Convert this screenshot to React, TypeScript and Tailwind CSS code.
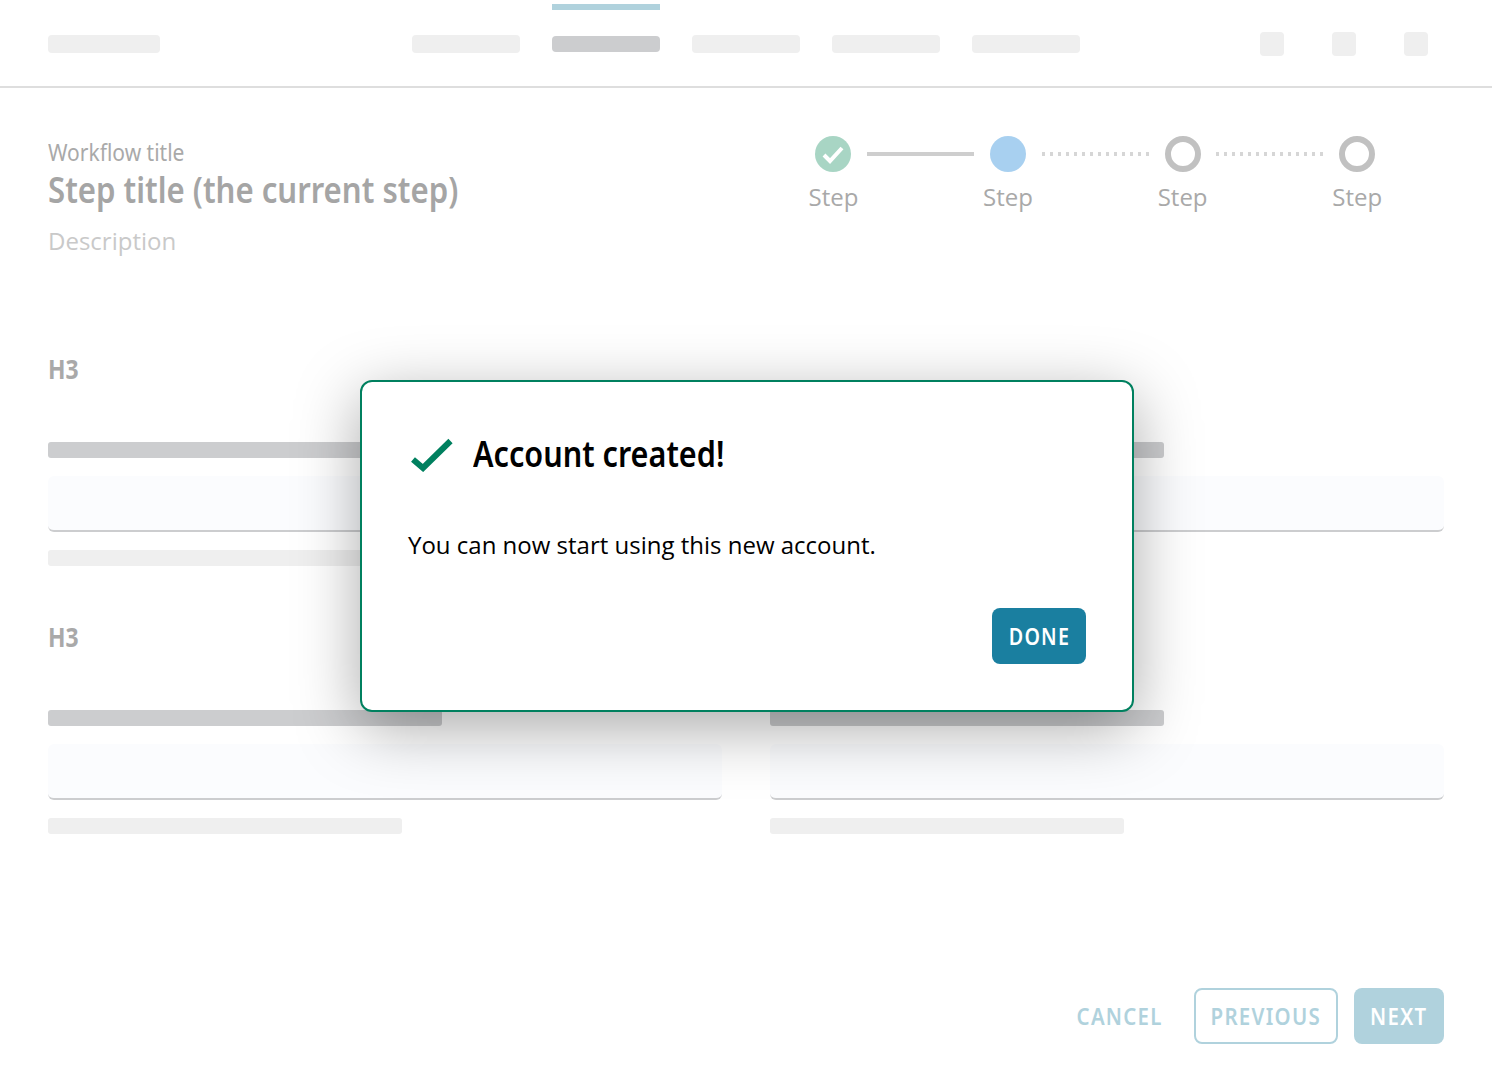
const noto = "font-['Noto_Sans',sans-serif]";
const body = "font-['Open_Sans','Noto_Sans',sans-serif]";
const btn = `${noto} text-[24px] font-semibold tracking-[1.5px]`;

function Field() {
  return (
    <div className="flex flex-col">
      <div className="h-4 w-[394px] rounded-[3px] bg-[#cccdcf]" />
      <div className="mt-[18px] h-14 w-full rounded-md border-b-2 border-[#cccdcf] bg-[#fbfcfe]" />
      <div className="mt-[18px] h-4 w-[354px] rounded-[3px] bg-[#efefef]" />
    </div>
  );
}

function Group({ className }: { className: string }) {
  return (
    <section className={className}>
      <h3 className={`${noto} h-8 origin-left scale-x-[0.88] text-[26px] leading-8 font-bold text-[#a9a9a9]`}>H3</h3>
      <div className="mt-[57px] grid grid-cols-[674px_674px] gap-x-12">
        <Field />
        <Field />
      </div>
    </section>
  );
}

function Circle({ kind }: { kind: "done" | "current" | "todo" }) {
  if (kind === "done")
    return (
      <svg width="36" height="36" viewBox="0 0 36 36">
        <circle cx="18" cy="18" r="18" fill="#a8d5c4" />
        <path d="M9 19 L15 25 L27 12" fill="none" stroke="#fff" strokeWidth="4" />
      </svg>
    );
  if (kind === "current") return <div className="size-9 rounded-full bg-[#a8d0f0]" />;
  return <div className="size-9 rounded-full border-[6px] border-[#c1c1c1]" />;
}

function Step({ kind }: { kind: "done" | "current" | "todo" }) {
  return (
    <div className="flex w-[69.6px] flex-col items-center">
      <Circle kind={kind} />
      <span className={`${body} mt-[10px] text-[24px] leading-[30px] text-[#a9a9a9]`}>Step</span>
    </div>
  );
}

function Solid() {
  return <div className="mx-[-1px] mt-4 h-1 w-[107px] shrink-0 bg-[#cecece]" />;
}

function Dotted() {
  return (
    <div className="mx-[-1px] mt-4 flex h-1 w-[107px] shrink-0 justify-between">
      {Array.from({ length: 14 }).map((_, i) => (
        <span key={i} className="h-1 w-[3px] bg-[#d6d6d6]" />
      ))}
    </div>
  );
}

export default function App() {
  return (
    <div className="relative h-[1092px] w-[1492px] overflow-hidden bg-white">
      <header className="relative flex h-[88px] items-center border-b-2 border-[#dedede] pl-12 pr-16 pt-0.5">
        <div className="h-[18px] w-28 rounded-[4px] bg-[#efefef]" />
        <nav className="ml-[252px] flex items-center gap-8">
          <div className="h-[18px] w-[108px] rounded-[4px] bg-[#efefef]" />
          <div className="relative h-4 w-[108px] rounded-[4px] bg-[#cccdcf]">
            <div className="absolute -top-8 left-0 h-1.5 w-full bg-[#b0d2dd]" />
          </div>
          <div className="h-[18px] w-[108px] rounded-[4px] bg-[#efefef]" />
          <div className="h-[18px] w-[108px] rounded-[4px] bg-[#efefef]" />
          <div className="h-[18px] w-[108px] rounded-[4px] bg-[#efefef]" />
        </nav>
        <div className="ml-auto flex gap-12">
          <div className="size-6 rounded-[4px] bg-[#efefef]" />
          <div className="size-6 rounded-[4px] bg-[#efefef]" />
          <div className="size-6 rounded-[4px] bg-[#efefef]" />
        </div>
      </header>

      <main className="px-12">
        <div className="flex h-[186px] items-start justify-between pt-[48px]">
          <div className="mt-[2px] flex flex-col items-start">
            <span className={`${noto} origin-left scale-x-[0.875] text-[24px] leading-[28px] text-[#a9a9a9]`}>Workflow title</span>
            <span className={`${noto} mt-[4px] origin-left scale-x-[0.865] text-[36px] leading-[40px] font-semibold text-[#a5a5a5]`}>
              Step title (the current step)
            </span>
            <span className={`${body} mt-[15px] text-[24px] leading-8 text-[#c9c9c9]`}>Description</span>
          </div>
          <div className="mr-[52px] flex items-start">
            <Step kind="done" />
            <Solid />
            <Step kind="current" />
            <Dotted />
            <Step kind="todo" />
            <Dotted />
            <Step kind="todo" />
          </div>
        </div>

        <Group className="pt-[79px]" />
        <Group className="pt-[55px]" />

        <footer className="mt-[154px] flex items-center justify-end gap-4">
          <button className="h-14 w-[116px] rounded-lg text-[#b0d2dd]">
            <span className={`${btn} inline-block scale-x-[0.85]`}>CANCEL</span>
          </button>
          <button className="h-14 w-36 rounded-lg border-2 border-[#b0d2dd] text-[#b0d2dd]">
            <span className={`${btn} inline-block scale-x-[0.853]`}>PREVIOUS</span>
          </button>
          <button className="h-14 w-[90px] rounded-lg bg-[#b0d2dd] text-white">
            <span className={`${btn} inline-block scale-x-[0.85]`}>NEXT</span>
          </button>
        </footer>
      </main>

      <div className="absolute left-[360px] top-[380px] flex h-[332px] w-[774px] flex-col rounded-xl border-2 border-[#00805f] bg-white px-[46px] pt-[46px] shadow-[0_16px_64px_rgba(0,0,0,0.34)]">
        <div className="flex items-center">
          <svg width="46" height="36" viewBox="0 0 46 36" className="ml-[2px] shrink-0">
            <path d="M3 23.5 L13 32 L40.5 5" fill="none" stroke="#00805f" strokeWidth="6" />
          </svg>
          <h2 className={`${noto} ml-[17px] origin-left scale-x-[0.85] text-[36px] leading-[52px] font-semibold text-black`}>Account created!</h2>
        </div>
        <p className={`${body} mt-[49px] text-[24px] leading-8 text-black`}>You can now start using this new account.</p>
        <div className="mt-[47px] flex justify-end">
          <button className="h-14 w-[94px] rounded-lg bg-[#1a7fa0] text-white">
            <span className={`${btn} inline-block scale-x-[0.82]`}>DONE</span>
          </button>
        </div>
      </div>
    </div>
  );
}
